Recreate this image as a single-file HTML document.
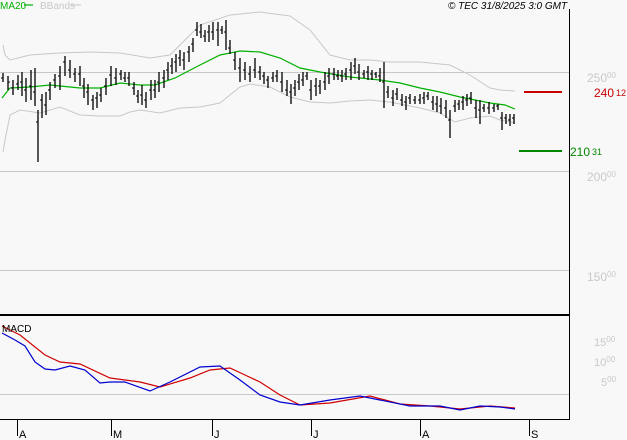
<!DOCTYPE html><html><head><meta charset="utf-8"><style>
html,body{margin:0;padding:0;background:#f8f8f8;width:627px;height:440px;overflow:hidden}
svg{display:block;font-family:"Liberation Sans",sans-serif}
</style></head><body>
<svg width="627" height="440" viewBox="0 0 627 440" xmlns="http://www.w3.org/2000/svg">
<rect width="627" height="440" fill="#f8f8f8"/>
<g stroke="#c8c8c8" stroke-width="1" fill="none">
<line x1="0" y1="72.5" x2="569" y2="72.5"/>
<line x1="0" y1="171.5" x2="569" y2="171.5"/>
<line x1="0" y1="270.5" x2="569" y2="270.5"/>
<line x1="0" y1="394.5" x2="569" y2="394.5"/>
<polyline points="3,45 5,55 10,60 30,55 60,53 90,52 120,53 150,58 170,55 185,40 200,25 230,15 260,12 290,16 310,30 330,55 350,60 370,60 390,62 420,62 450,65 470,75 490,88 500,90 515,91"/>
<polyline points="3,152 5,140 10,115 20,110 40,113 60,107 80,115 100,116 120,116 130,112 140,110 160,113 180,108 200,107 220,103 240,87 250,84 270,87 290,97 310,102 330,103 350,101 370,100 390,102 420,108 440,113 455,122 470,118 490,116 500,120 515,123"/>
</g>
<polyline fill="none" stroke="#00b000" stroke-width="1.2" points="2,98 10,88 30,87 50,85 80,88 100,88 120,83 140,85 155,85 175,78 200,65 220,55 240,51 260,52 280,58 300,68 320,72 350,77 380,80 400,83 420,88 440,92 460,97 490,103 505,105 515,109"/>
<path stroke="#000" stroke-width="1.3" fill="none" d="M3 73V82M8 76V90M13 80V95M18 75V90M22 72V96M26 78V102M31 70V100M35 68V106M38 110V162M42 94V118M46 92V115M50 82V100M55 74V88M60 66V90M65 56V76M70 60V78M75 68V82M80 66V86M84 78V98M88 84V105M93 95V110M97 92V108M101 88V102M106 78V95M111 66V86M116 68V85M121 70V80M125 72V82M129 72V86M134 82V95M138 90V103M142 85V105M146 92V108M151 80V100M155 80V98M159 72V92M164 70V88M168 62V80M172 58V74M176 54V72M180 50V66M184 52V70M189 46V62M193 38V52M197 22V36M201 24V38M205 30V42M209 25V42M213 22V40M218 22V46M222 26V34M226 20V50M230 40V54M235 52V70M240 58V82M245 62V80M250 66V82M255 58V78M260 66V80M264 72V84M268 76V88M273 72V82M277 70V82M282 72V92M287 80V96M291 84V104M295 80V96M299 74V90M303 72V86M307 72V80M311 80V100M316 78V96M320 80V94M325 72V90M329 68V84M334 68V80M338 70V80M342 70V82M346 68V80M351 62V80M355 58V74M359 64V80M364 70V78M368 66V80M372 70V80M376 72V78M380 68V82M384 62V108M388 86V98M393 90V106M397 88V100M402 94V106M406 96V110M410 94V104M415 96V104M420 94V104M424 92V104M428 92V100M433 96V110M437 96V112M441 98V114M446 100V118M450 110V138M455 100V112M459 100V110M463 96V110M467 94V106M471 92V104M476 100V118M480 100V124M484 104V112M489 102V114M494 104V112M498 104V110M502 112V130M506 114V124M510 114V126M514 114V124"/>
<path stroke="#000" stroke-width="1" fill="none" d="M1 78H3M8 82H10M11 88H13M16 84H18M20 82H22M24 90H26M29 86H31M33 92H35M36 122H38M40 100H42M44 105H46M48 90H50M53 80H55M58 76H60M63 62H65M68 70H70M73 74H75M78 74H80M82 86H84M86 92H88M91 100H93M95 98H97M99 95H101M104 86H106M109 75H111M114 78H116M119 74H121M123 78H125M127 78H129M132 88H134M136 96H138M140 95H142M144 100H146M149 90H151M153 90H155M157 82H159M162 78H164M166 70H168M170 66H172M174 62H176M178 58H180M182 60H184M187 52H189M191 44H193M195 30H197M199 32H201M203 36H205M207 32H209M211 32H213M216 30H218M220 30H222M224 32H226M228 48H230M233 60H235M238 68H240M243 70H245M248 74H250M253 70H255M258 72H260M262 76H264M266 80H268M271 78H273M275 76H277M280 82H282M285 90H287M289 92H291M293 88H295M297 82H299M301 80H303M305 76H307M309 90H311M314 86H316M318 86H320M323 82H325M327 76H329M332 74H334M336 76H338M340 76H342M344 74H346M349 70H351M353 66H355M357 72H359M362 74H364M366 72H368M370 74H372M374 74H376M378 76H380M382 82H384M386 92H388M391 98H393M395 94H397M400 100H402M404 102H406M408 98H410M413 100H415M418 100H420M422 98H424M426 96H428M431 102H433M435 104H437M439 106H441M444 108H446M448 120H450M453 106H455M457 104H459M461 102H463M465 100H467M469 98H471M474 108H476M478 110H480M482 108H484M487 108H489M492 108H494M496 106H498M500 118H502M504 118H506M508 120H510M512 118H514"/>
<line x1="524" y1="92" x2="562" y2="92" stroke="#c80000" stroke-width="2"/>
<line x1="519" y1="151" x2="562" y2="151" stroke="#008800" stroke-width="2"/>
<line x1="569.5" y1="9" x2="569.5" y2="420" stroke="#000" stroke-width="1"/>
<line x1="0" y1="315" x2="570" y2="315" stroke="#000" stroke-width="2"/>
<line x1="0" y1="419.5" x2="570" y2="419.5" stroke="#000" stroke-width="1"/>
<polyline fill="none" stroke="#d00000" stroke-width="1.2" points="2,326 20,335 45,355 60,362 80,364 110,378 140,382 160,387 190,378 210,370 230,368 245,375 260,382 280,395 300,405 330,403 370,396 400,404 430,406 460,409 490,406 515,408"/>
<polyline fill="none" stroke="#0000d0" stroke-width="1.2" points="2,333 15,340 25,346 35,362 45,369 55,370 70,366 85,370 100,383 110,382 125,382 150,391 170,382 200,367 220,366 240,380 260,395 280,402 300,405 330,400 360,396 380,400 410,406 440,406 460,410 480,406 500,407 515,409"/>
<g stroke="#000" stroke-width="1"><line x1="17.5" y1="419" x2="17.5" y2="436"/><line x1="111.5" y1="419" x2="111.5" y2="436"/><line x1="212.5" y1="419" x2="212.5" y2="436"/><line x1="311.5" y1="419" x2="311.5" y2="436"/><line x1="420.5" y1="419" x2="420.5" y2="436"/><line x1="529.5" y1="419" x2="529.5" y2="436"/></g>
<g font-size="11" fill="#000"><text x="19" y="438">A</text><text x="113" y="438">M</text><text x="214" y="438">J</text><text x="313" y="438">J</text><text x="422" y="438">A</text><text x="531" y="438">S</text></g>
<text x="2" y="332" font-size="10" fill="#000">MACD</text>
<text x="0" y="9" font-size="10" fill="#00b000">MA20</text><line x1="24" y1="5" x2="33" y2="5" stroke="#00b000" stroke-width="1.2"/>
<text x="40" y="9" font-size="10" fill="#c8c8c8">BBands</text><line x1="71" y1="5" x2="81" y2="5" stroke="#c8c8c8"/>
<text x="448" y="9" font-size="10" font-style="italic" fill="#000">© TEC 31/8/2025 3:0 GMT</text>
<g fill="#c8c8c8" font-size="12"><text x="587" y="82">250<tspan font-size="8" dy="-4">00</tspan></text><text x="587" y="181">200<tspan font-size="8" dy="-4">00</tspan></text><text x="587" y="281">150<tspan font-size="8" dy="-4">00</tspan></text>
<text x="594" y="346" font-size="11">15<tspan font-size="8" dy="-4">00</tspan></text><text x="594" y="366" font-size="11">10<tspan font-size="8" dy="-4">00</tspan></text><text x="601" y="386" font-size="11">5<tspan font-size="8" dy="-4">00</tspan></text></g>
<text x="594" y="97" font-size="12" fill="#c80000">240<tspan font-size="9" dx="2" dy="-1">12</tspan></text>
<text x="570" y="156" font-size="12" fill="#008800">210<tspan font-size="9" dx="2" dy="-1">31</tspan></text>
</svg>
</body></html>
